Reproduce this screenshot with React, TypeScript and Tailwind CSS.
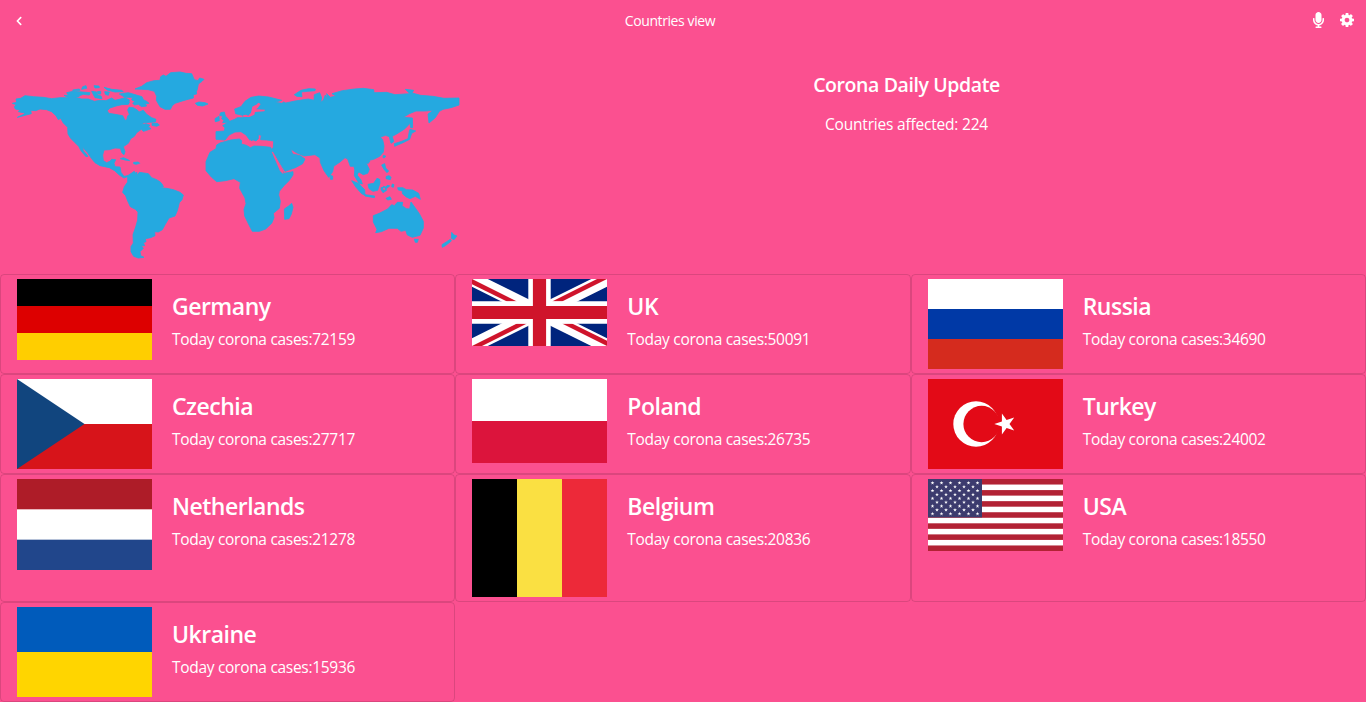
import type { ReactNode } from 'react';
import { FaChevronLeft, FaMicrophone } from 'react-icons/fa';

const starPoints = (cx: number, cy: number, r: number, turn = -90) =>
  Array.from({ length: 10 }, (_, i) => {
    const a = ((turn + i * 36) * Math.PI) / 180;
    const d = i % 2 ? r * 0.382 : r;
    return `${(cx + d * Math.cos(a)).toFixed(2)},${(cy + d * Math.sin(a)).toFixed(2)}`;
  }).join(' ');

const Cog = () => (
  <svg viewBox="128 128 1536 1536" fill="currentColor" className="size-[14px]">
    <path d="M1152 896q0-106-75-181t-181-75-181 75-75 181 75 181 181 75 181-75 75-181zm512-109v222q0 12-8 23t-20 13l-185 28q-19 54-39 91 35 50 107 138 10 12 10 25t-9 23q-27 37-99 108t-94 71q-12 0-26-9l-138-108q-44 23-91 38-16 136-29 186-7 28-36 28h-222q-14 0-24.5-8.5t-11.5-21.5l-28-184q-49-16-90-37l-141 107q-10 9-25 9-14 0-25-11-126-114-165-168-7-10-7-23 0-12 8-23 15-21 51-66.5t54-70.5q-27-50-41-99l-183-27q-13-2-21-12.5t-8-23.5v-222q0-12 8-23t19-13l186-28q14-46 39-92-40-57-107-138-10-12-10-24 0-10 9-23 26-36 98.5-107.5t94.5-71.5q13 0 26 10l138 107q44-23 91-38 16-136 29-186 7-28 36-28h222q14 0 24.5 8.5t11.5 21.5l28 184q49 16 90 37l142-107q9-9 24-9 13 0 25 10 129 119 165 170 7 8 7 22 0 12-8 23-15 21-51 66.5t-54 70.5q26 50 41 98l183 28q13 2 21 12.5t8 23.5z" />
  </svg>
);

const Flag = ({ h, children }: { h: number; children: ReactNode }) => (
  <svg width={135} height={h} viewBox={`0 0 135 ${h}`} className="block shrink-0">
    {children}
  </svg>
);

const Bands = ({ h, colors }: { h: number; colors: string[] }) => (
  <Flag h={h}>
    {colors.map((c, i) => (
      <rect key={i} y={(i * h) / colors.length} width="135" height={h / colors.length + (i < colors.length - 1 ? 0.5 : 0)} fill={c} />
    ))}
  </Flag>
);

const UkFlag = () => (
  <Flag h={67}>
    <rect width="135" height="67" fill="#00247d" />
    <path d="M0 0L135 67M135 0L0 67" stroke="#fff" strokeWidth="14" />
    <g fill="#cf142b">
      <path d="M0 0L45 22.4H35L0 5.2Z" />
      <path d="M125 0H135L90 22.4H80Z" />
      <path d="M0 67L45 44.6H55L10 67Z" />
      <path d="M90 44.6H100L135 61.8V67Z" />
    </g>
    <path d="M67.5 0V67M0 33.5H135" stroke="#fff" strokeWidth="22.4" />
    <path d="M67.5 0V67M0 33.5H135" stroke="#cf142b" strokeWidth="13.2" />
  </Flag>
);

const CzechFlag = () => (
  <Flag h={90}>
    <rect width="135" height="45" fill="#fff" />
    <rect y="45" width="135" height="45" fill="#d7141a" />
    <path d="M0 0L67.5 45L0 90Z" fill="#11457e" />
  </Flag>
);

const TurkeyFlag = () => (
  <Flag h={90}>
    <rect width="135" height="90" fill="#e30a17" />
    <circle cx="48" cy="45" r="22.7" fill="#fff" />
    <circle cx="53.6" cy="45" r="18.2" fill="#e30a17" />
    <polygon points={starPoints(77.3, 45, 11, 180)} fill="#fff" />
  </Flag>
);

const BelgiumFlag = () => (
  <Flag h={118}>
    <rect width="45" height="118" fill="#000" />
    <rect x="45" width="45" height="118" fill="#fae042" />
    <rect x="90" width="45" height="118" fill="#ed2939" />
  </Flag>
);

const UsaFlag = () => (
  <Flag h={72}>
    <rect width="135" height="72" fill="#fff" />
    {Array.from({ length: 7 }, (_, i) => (
      <rect key={i} y={(i * 2 * 72) / 13} width="135" height={72 / 13} fill="#b22234" />
    ))}
    <rect width="54" height="38.4" fill="#3c3b6e" />
    {Array.from({ length: 9 }, (_, r) =>
      Array.from({ length: r % 2 ? 5 : 6 }, (_, c) => (
        <polygon key={`${r}-${c}`} points={starPoints(4.5 + (r % 2 ? 4.5 : 0) + c * 9, 3.9 + r * 3.87, 2)} fill="#fff" />
      )),
    )}
  </Flag>
);

const countries = [
  { name: 'Germany', cases: 72159, flag: <Bands h={81} colors={['#000', '#dd0000', '#ffce00']} /> },
  { name: 'UK', cases: 50091, flag: <UkFlag /> },
  { name: 'Russia', cases: 34690, flag: <Bands h={90} colors={['#fff', '#0039a6', '#d52b1e']} /> },
  { name: 'Czechia', cases: 27717, flag: <CzechFlag /> },
  { name: 'Poland', cases: 26735, flag: <Bands h={84} colors={['#fff', '#dc143c']} /> },
  { name: 'Turkey', cases: 24002, flag: <TurkeyFlag /> },
  { name: 'Netherlands', cases: 21278, flag: <Bands h={91} colors={['#ae1c28', '#fff', '#21468b']} /> },
  { name: 'Belgium', cases: 20836, flag: <BelgiumFlag /> },
  { name: 'USA', cases: 18550, flag: <UsaFlag /> },
  { name: 'Ukraine', cases: 15936, flag: <Bands h={90} colors={['#005bbb', '#ffd500']} /> },
];

const land = [
  // North America
  'M48 117L62 115L75 107L100 110L130 112L155 116L180 113L205 113L225 112L245 117L265 117L283 124L300 121L318 122L335 114L345 121L362 117L375 113L388 120L385 133L365 134L348 138L330 144L322 152L326 160L345 163L368 167L375 181L380 180L383 168L388 163L383 150L387 142L400 143L412 150L417 156L430 151L440 163L455 173L468 178L466 186L448 187L432 188L420 195L438 192L440 198L453 206L440 211L430 214L424 208L410 218L403 229L392 236L385 250L370 260L375 275L372 284L366 279L361 265L345 264L328 269L312 270L308 285L310 302L320 308L330 304L335 298L347 299L342 310L345 320L360 321L363 337L372 349L383 347L388 354L382 350L372 354L358 345L344 332L328 323L300 317L285 308L274 295L262 277L248 262L250 272L264 289L258 290L244 274L236 259L224 247L212 235L204 222L203 202L190 189L182 175L175 179L168 167L155 155L140 149L120 147L107 152L92 151L94 161L75 166L52 172L72 163L75 159L55 155L60 150L46 147L43 140L49 134L37 130L50 127Z',
  // Arctic islands
  'M200 98L220 94L248 96L270 98L268 105L250 103L233 109L205 106ZM192 106L230 108L238 110L205 113ZM218 90L238 87L240 91L220 93ZM248 80L258 77L260 85L245 88ZM282 77L297 78L298 83L285 84ZM275 94L290 96L293 106L303 108L306 116L285 113ZM292 95L302 94L302 102L294 102ZM314 95L328 96L325 106L316 103ZM312 82L335 88L365 91L370 95L345 96L322 90ZM358 102L385 98L412 106L426 110L430 119L442 125L447 130L435 132L440 138L425 140L415 133L404 135L398 130L405 125L395 119L398 112L375 112ZM374 125L388 126L386 131L374 132Z',
  'M420 196L433 194L438 191L450 196L438 205L424 202ZM456 190L472 190L478 195L470 199L456 196Z',
  // Caribbean
  'M361 296L370 293L382 298L389 302L375 300ZM401 307L415 306L419 310L408 313L401 311Z',
  // Greenland, Iceland
  'M405 87L425 79L440 68L462 62L480 61L482 50L490 45L498 49L512 38L540 36L558 40L575 41L578 48L583 59L594 62L599 54L612 58L606 64L595 72L592 88L589 95L590 102L580 104L580 114L560 119L540 125L525 130L517 137L511 148L495 148L480 140L469 121L470 109L463 94L445 89L425 88ZM586 130L597 126L615 128L624 132L608 138L592 136Z',
  // South America
  'M383 347L403 334L406 340L410 336L412 346L418 337L445 341L455 353L470 359L482 367L488 375L490 381L480 383L500 385L520 389L540 397L550 405L546 419L538 428L532 452L525 468L507 474L496 493L487 509L475 516L464 515L465 527L452 533L436 536L438 545L430 548L434 557L424 557L430 565L420 575L422 587L432 592L415 594L401 589L393 575L393 560L400 549L399 524L407 501L413 480L414 456L406 448L391 440L383 423L377 407L368 397L373 380L383 366Z',
  // Africa and Madagascar
  'M650 255L660 249L692 240L718 237L725 242L724 252L739 256L751 263L762 258L785 259L812 262L817 276L832 306L843 324L852 340L879 335L879 345L868 361L852 377L838 394L836 405L841 424L838 445L820 460L822 473L815 490L797 507L778 514L757 514L746 493L734 468L732 448L738 431L735 414L719 385L721 367L702 356L676 362L650 365L634 351L618 332L618 305L630 277L648 266ZM853 447L866 438L875 430L879 442L874 462L867 476L854 478Z',
  // Europe and Asia
  'M648 215L673 213L675 203L668 197L686 185L704 178L712 173L730 173L728 166L707 161L704 147L723 140L735 124L753 112L776 108L806 111L845 121L825 127L846 130L851 126L857 129L885 123L925 117L942 121L943 104L959 98L965 114L962 127L970 121L976 105L983 116L980 101L991 112L1008 108L996 101L1027 92L1063 87L1090 85L1121 89L1122 98L1160 97L1185 104L1230 101L1216 88L1241 91L1236 99L1262 106L1299 109L1332 115L1377 114L1377 135L1353 143L1329 148L1318 154L1306 173L1287 189L1284 162L1300 151L1275 153L1248 153L1228 161L1210 172L1237 174L1238 203L1232 203L1230 190L1215 206L1190 222L1177 229L1181 245L1173 250L1168 230L1157 226L1141 231L1148 239L1152 258L1150 276L1139 289L1121 298L1102 302L1100 312L1108 328L1103 340L1090 344L1078 337L1070 342L1065 328L1061 319L1051 319L1043 297L1035 293L1020 306L1001 319L998 335L986 352L972 332L961 307L960 294L945 284L912 288L889 278L872 267L878 282L901 287L915 297L908 311L886 323L855 334L840 310L826 286L813 270L820 262L821 243L800 240L782 239L784 226L775 224L775 236L768 243L758 239L755 243L747 226L735 213L741 213L755 224L765 235L756 232L750 241L738 225L723 215L705 216L687 225L675 240L648 238Z',
  // British Isles
  'M662 158L673 156L676 168L684 176L690 186L668 188L672 181L665 176L668 169L659 166ZM645 176L657 169L658 182L646 185Z',
  // Novaya Zemlya
  'M883 104L903 91L926 86L946 87L945 92L923 94L904 96L906 110L890 109Z',
  // Japan
  'M1228 214L1230 208L1247 213L1235 220L1229 238L1209 248L1184 259L1183 251L1205 244L1224 236Z',
  // Southeast Asia
  'M1065 320L1073 332L1072 346L1083 360L1087 372L1077 370L1063 347ZM1055 362L1075 370L1094 389L1095 406L1085 401L1068 382ZM1095 404L1124 408L1123 413L1095 408ZM1104 373L1121 370L1131 355L1139 358L1140 369L1133 391L1119 394L1107 386ZM1143 383L1154 382L1160 391L1149 398L1144 391ZM1160 385L1166 381L1169 377L1162 376L1157 381L1150 379L1147 389L1155 391ZM1158 415L1170 410L1174 418L1163 420ZM1177 372L1182 374L1180 382L1175 380ZM1150 286L1157 288L1154 293L1149 293ZM1145 315L1154 311L1157 324L1166 333L1161 338L1152 328ZM1159 349L1168 347L1173 352L1171 359L1158 356ZM1103 299L1110 303L1104 311L1100 307ZM990 346L998 348L998 358L991 358Z',
  'M1193 383L1208 383L1219 389L1238 390L1256 400L1261 418L1246 409L1230 416L1219 411L1208 402L1206 392L1195 390Z',
  // Australia, Tasmania, New Zealand
  'M1120 467L1138 460L1163 447L1175 434L1183 437L1192 427L1208 427L1206 437L1219 446L1229 447L1233 426L1246 444L1258 461L1270 484L1270 504L1260 526L1237 532L1222 525L1217 511L1203 514L1192 505L1167 505L1144 515L1127 518L1131 508L1120 486ZM1243 538L1255 538L1252 547L1246 547ZM1355 517L1362 525L1371 528L1362 539L1354 535ZM1351 538L1354 543L1336 557L1327 562L1326 554L1340 545Z',
];

const WorldMap = () => (
  <svg width="480" height="210" viewBox="0 0 1440 630" className="block">
    <g fill="#25a9e0" stroke="#25a9e0" strokeWidth="2.5" strokeLinejoin="round">
      {land.map((d, i) => (
        <path key={i} d={d} />
      ))}
    </g>
    {/* Baltic, Gulf of Bothnia and Red Sea */}
    <path
      fill="#fb5090"
      d="M729 166L738 164L745 167L753 158L757 140L769 134L775 128L782 132L774 143L768 148L795 149L793 154L765 156L763 164L748 171L730 171ZM815 275L819 276L850 334L850 343L840 333Z"
    />
  </svg>
);

export default function App() {
  return (
    <main className="min-h-[702px] w-full overflow-hidden bg-[#fb5090] font-['Segoe_UI','Open_Sans',sans-serif] text-white">
      <header className="flex h-10 items-center justify-between pr-3 pl-3.5">
        <FaChevronLeft className="mt-0.5 size-[10px]" />
        <h1 className="mt-0.5 ml-[3px] text-[14px] leading-5 tracking-[-0.4px]">Countries view</h1>
        <div className="flex items-center gap-4">
          <FaMicrophone className="h-4 w-[11px]" />
          <Cog />
        </div>
      </header>

      <section className="flex h-[234px] pt-5">
        <WorldMap />
        <div className="-ml-[33px] flex flex-1 flex-col items-center pt-3">
          <h2 className="text-[19.5px] leading-[26px] font-[640] tracking-[-0.4px]">Corona Daily Update</h2>
          <p className="mt-3.5 text-[15.5px] leading-6 tracking-[-0.2px]">Countries affected: 224</p>
        </div>
      </section>

      <ul className="grid grid-cols-3">
        {countries.map(({ name, cases, flag }) => (
          <li key={name} className="flex items-start gap-5 rounded border border-black/[0.125] px-4 py-1">
            {flag}
            <div className="pt-[11px]">
              <h3 className="text-[23px] leading-8 font-[640] tracking-[-0.5px]">{name}</h3>
              <p className="mt-[5px] text-[15.5px] leading-6 tracking-[-0.3px]">{`Today corona cases:${cases}`}</p>
            </div>
          </li>
        ))}
      </ul>
    </main>
  );
}
